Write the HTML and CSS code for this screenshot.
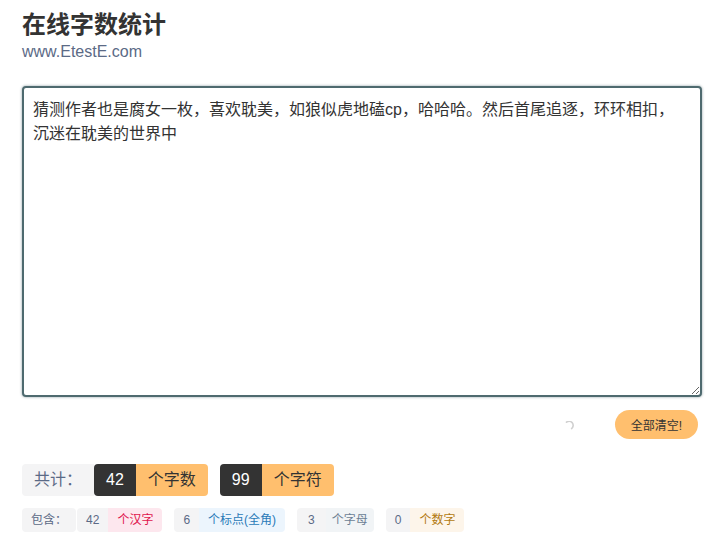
FILE: index.html
```html
<!DOCTYPE html>
<html lang="zh-CN">
  <head>
    <meta charset="UTF-8" />
    <meta name="viewport" content="width=device-width, initial-scale=1.0" />
    <title>在线字数统计</title>
    <link rel="stylesheet" href="styles.css">
  </head>
  <body>
    <header class="head">
      <h1 class="head__title">在线字数统计</h1>
      <div class="head__site">www.EtestE.com</div>
    </header>

    <textarea class="editor">猜测作者也是腐女一枚，喜欢耽美，如狼似虎地磕cp，哈哈哈。然后首尾追逐，环环相扣，沉迷在耽美的世界中</textarea>

    <div class="actions">
      <svg class="spinner" width="10" height="10" viewBox="0 0 10 10">
        <path d="M2.5 1.2 A4 4 0 0 1 7.6 7.6" fill="none" stroke="#d0d0d0" stroke-width="1.6" stroke-linecap="round" />
      </svg>
      <button class="btn-clear" type="button">全部清空!</button>
    </div>

    <div class="total">
      <span class="tag tag--label">共计：</span>
      <span class="tag tag--num">42</span>
      <span class="tag tag--unit">个字数</span>
      <span class="total__gap"></span>
      <span class="tag tag--num">99</span>
      <span class="tag tag--unit">个字符</span>
    </div>

    <div class="detail">
      <span class="chip chip--label">包含：</span>
      <span class="chip chip--num">42</span>
      <span class="chip chip--han">个汉字</span>
      <span class="detail__gap"></span>
      <span class="chip chip--num">6</span>
      <span class="chip chip--punc">个标点(全角)</span>
      <span class="detail__gap"></span>
      <span class="chip chip--num chip--wide">3</span>
      <span class="chip chip--alpha">个字母</span>
      <span class="detail__gap"></span>
      <span class="chip chip--num">0</span>
      <span class="chip chip--digit">个数字</span>
    </div>
  </body>
</html>
```

FILE: styles.css
```css
:root {
  --text: #333;
  --slate: #5b6a86;
  --border: #4e6a6f;
  --orange: #ffbf6e;
  --dark: #333;
}
*,
*::before,
*::after {
  box-sizing: border-box;
}
body {
  margin: 0;
  padding: 8px 6px 0 22px;
  color: var(--text);
  font-family: "Liberation Sans", "Noto Sans CJK SC", sans-serif;
  background: #fff;
}

/* Header */
.head__title {
  margin: 0;
  font-size: 24px;
  line-height: 34px;
  font-weight: bold;
  color: #333;
}
.head__site {
  font-size: 16px;
  line-height: 20px;
  color: var(--slate);
}

/* Editor */
.editor {
  display: block;
  width: 680px;
  height: 311px;
  margin: 24px 0 0;
  padding: 10px 24px 10px 9px;
  font-family: "Liberation Sans", "Noto Sans CJK SC", sans-serif;
  font-size: 16px;
  line-height: 24px;
  color: #333;
  border: 2px solid var(--border);
  border-radius: 4px;
  box-shadow: 0 0 2px 1px rgba(78, 106, 111, 0.3);
  outline: none;
  resize: vertical;
}

.actions {
  display: flex;
  justify-content: flex-end;
  align-items: center;
  width: 676px;
  margin-top: 13px;
}
.spinner {
  margin-right: 41px;
  margin-top: 2px;
}
.btn-clear {
  height: 29px;
  padding: 0 16px;
  font-family: "Liberation Sans", "Noto Sans CJK SC", sans-serif;
  font-size: 12px;
  color: #333;
  background: var(--orange);
  border: none;
  border-radius: 15px;
  cursor: pointer;
}

/* Totals */
.total {
  display: flex;
  margin-top: 25px;
}
.tag {
  height: 32px;
  padding: 0 12px;
  font-size: 16px;
  line-height: 32px;
}
.tag--label {
  color: var(--slate);
  background: #f4f4f5;
  border-radius: 4px 0 0 4px;
}
.tag--num {
  color: #fff;
  background: var(--dark);
  border-radius: 4px 0 0 4px;
}
.tag--unit {
  color: #333;
  background: var(--orange);
  border-radius: 0 4px 4px 0;
}
.total__gap {
  width: 12px;
}

/* Detail chips */
.detail {
  display: flex;
  margin-top: 12px;
}
.chip {
  height: 24px;
  padding: 0 9px;
  font-size: 12px;
  line-height: 24px;
}
.chip--label {
  color: var(--slate);
  background: #f4f4f5;
  border-radius: 4px;
  margin-right: 1px;
}
.chip--num {
  color: var(--slate);
  background: #f4f4f5;
  border-radius: 4px 0 0 4px;
}
.chip--wide {
  padding: 0 11px;
}
.chip--han {
  color: #e0144c;
  background: #fde7ee;
  border-radius: 0 4px 4px 0;
}
.chip--punc {
  color: #2a7ab8;
  background: #ecf5fd;
  border-radius: 0 4px 4px 0;
}
.chip--alpha {
  color: #6c7f94;
  background: #f1f4f6;
  padding: 0 6px;
  border-radius: 0 4px 4px 0;
}
.chip--digit {
  color: #b37a10;
  background: #fdf5ea;
  border-radius: 0 4px 4px 0;
}
.detail__gap {
  width: 12px;
}
```
